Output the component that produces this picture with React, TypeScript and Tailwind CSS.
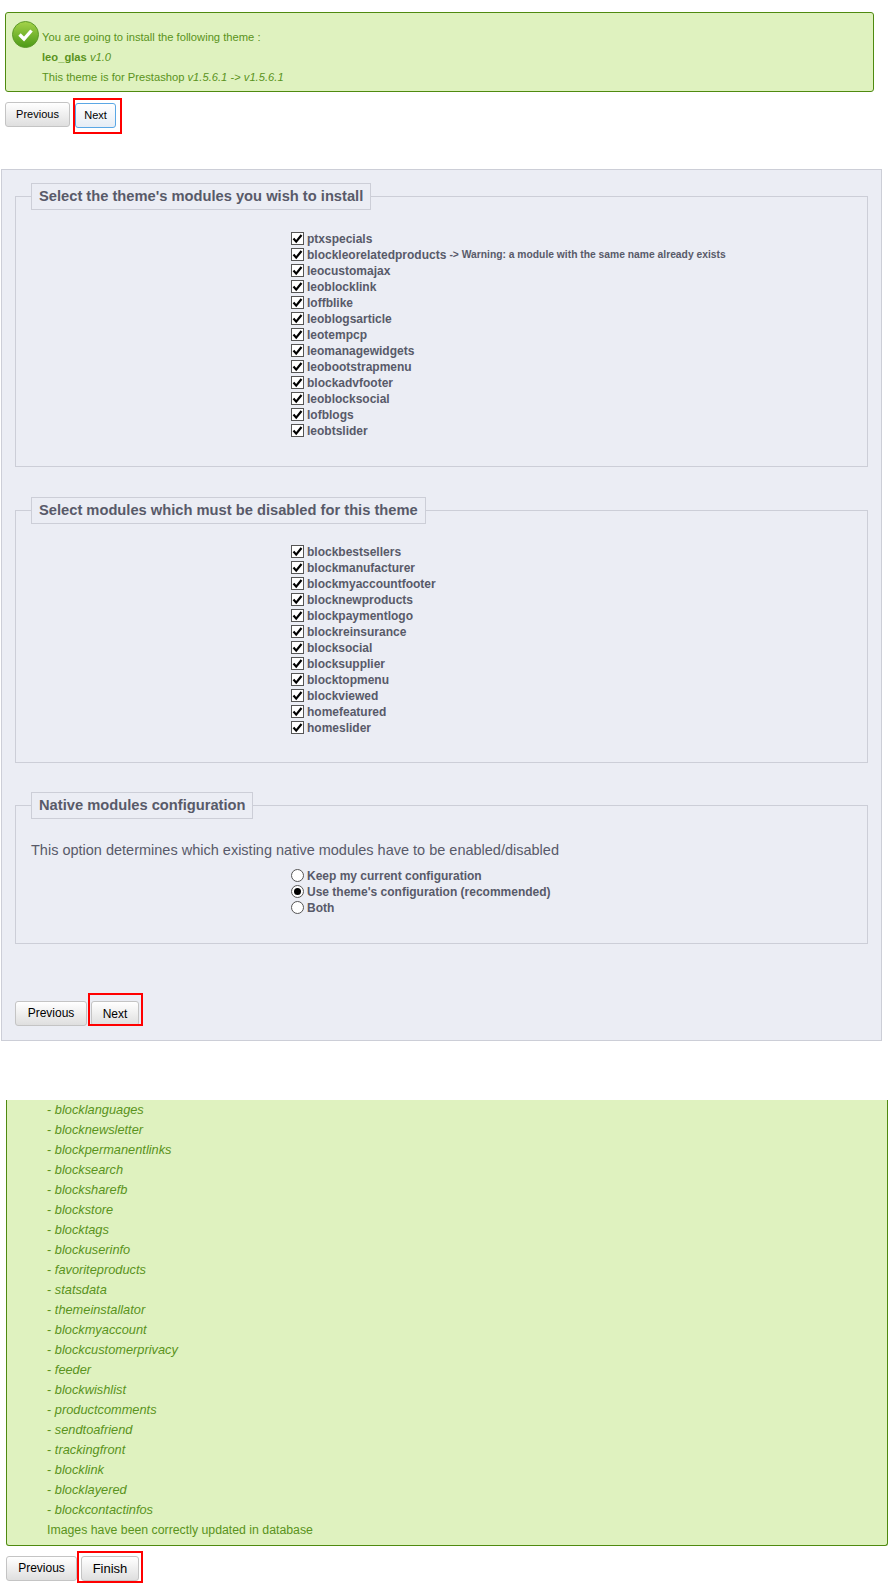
const installModules = ['ptxspecials', 'blockleorelatedproducts', 'leocustomajax', 'leoblocklink', 'loffblike', 'leoblogsarticle', 'leotempcp', 'leomanagewidgets', 'leobootstrapmenu', 'blockadvfooter', 'leoblocksocial', 'lofblogs', 'leobtslider'];

const disableModules = ['blockbestsellers', 'blockmanufacturer', 'blockmyaccountfooter', 'blocknewproducts', 'blockpaymentlogo', 'blockreinsurance', 'blocksocial', 'blocksupplier', 'blocktopmenu', 'blockviewed', 'homefeatured', 'homeslider'];

const updatedModules = ['blocklanguages', 'blocknewsletter', 'blockpermanentlinks', 'blocksearch', 'blocksharefb', 'blockstore', 'blocktags', 'blockuserinfo', 'favoriteproducts', 'statsdata', 'themeinstallator', 'blockmyaccount', 'blockcustomerprivacy', 'feeder', 'blockwishlist', 'productcomments', 'sendtoafriend', 'trackingfront', 'blocklink', 'blocklayered', 'blockcontactinfos'];

function Check({ label, note }: { label: string; note?: string }) {
  return (
    <div className="flex items-center h-4">
      <span className="w-[13px] h-[13px] border border-[#555] bg-white flex items-center justify-center shrink-0">
        <svg width="11" height="11" viewBox="0 0 11 11">
          <path d="M1.5 5.5 L4.2 8.6 L9.5 2" fill="none" stroke="#000" strokeWidth="2.2" />
        </svg>
      </span>
      <span className="ml-[3px] text-[12px] font-bold text-[#585a69] whitespace-nowrap">{label}</span>
      {note && <span className="ml-[3px] text-[10.3px] font-bold text-[#585a69] whitespace-nowrap">{note}</span>}
    </div>
  );
}

function Radio({ label, checked }: { label: string; checked?: boolean }) {
  return (
    <div className="flex items-center h-4">
      <span className="w-[13px] h-[13px] rounded-full border border-[#555] bg-white flex items-center justify-center shrink-0">
        {checked && <span className="w-[7px] h-[7px] rounded-full bg-black" />}
      </span>
      <span className="ml-[3px] text-[12px] font-bold text-[#585a69] whitespace-nowrap">{label}</span>
    </div>
  );
}

function Section({ title, className, children }: { title: string; className: string; children: React.ReactNode }) {
  return (
    <fieldset className={`border border-[#ccced7] w-[853px] ${className}`}>
      <legend className="ml-[15px] h-[27px] px-[7px] border border-[#ccced7] bg-[#ebedf4] text-[14.7px] font-bold text-[#585a69] leading-[25px]">
        {title}
      </legend>
      {children}
    </fieldset>
  );
}

function Btn({ label, className, focused }: { label: string; className: string; focused?: boolean }) {
  return (
    <button className={`rounded-[3px] border text-black text-center ${focused ? 'border-[#5aa7e5] bg-gradient-to-b from-white to-[#e6edf5]' : 'border-[#c4c4c4] bg-gradient-to-b from-white to-[#dfdfdf]'} ${className}`}>
      {label}
    </button>
  );
}

function SuccessIcon() {
  return (
    <svg width="27" height="27" viewBox="0 0 27 27" className="shrink-0">
      <defs>
        <linearGradient id="ok" x1="0" y1="0" x2="0" y2="1">
          <stop offset="0" stopColor="#a5d34a" />
          <stop offset="1" stopColor="#4c9a16" />
        </linearGradient>
      </defs>
      <circle cx="13.5" cy="13.5" r="13" fill="url(#ok)" stroke="#5d9a2a" />
      <path d="M7.5 13.5 L12 18 L19.5 9.5" fill="none" stroke="#fff" strokeWidth="3.4" />
    </svg>
  );
}

export default function App() {
  return (
    <div className="w-[894px] h-[1590px] bg-white overflow-hidden font-['Liberation_Sans',Arial,sans-serif]">
      <div className="pt-3 pl-[5px]">
        <div className="w-[869px] h-[80px] border border-[#4f8a10] rounded-[3px] bg-[#dff2bf] text-[#5a9320] text-[11.2px] flex pl-[6px] pt-2">
          <SuccessIcon />
          <div className="ml-[3px] pt-[6px] leading-[20px]">
            <div>You are going to install the following theme :</div>
            <div><b>leo_glas</b> <i>v1.0</i></div>
            <div>This theme is for Prestashop <i>v1.5.6.1</i> -&gt; <i>v1.5.6.1</i></div>
          </div>
        </div>
        <div className="flex mt-[10px]">
          <Btn label="Previous" className="w-[65px] h-[25px] text-[11px]" />
          <div className="relative ml-[5px]">
            <Btn label="Next" focused className="w-[41px] h-[25px] text-[11px]" />
            <span className="absolute -left-[2px] -right-[6px] -top-[4px] -bottom-[6px] border-2 border-[#f00]" />
          </div>
        </div>
      </div>

      <div className="mt-[41px] ml-[1px] w-[881px] h-[872px] border border-[#ccced7] bg-[#ebedf4] pl-[13px] pt-[13px]">
        <Section title="Select the theme's modules you wish to install" className="h-[284px]">
          <div className="pl-[275px] pt-[21px]">
            {installModules.map((m) => (
              <Check key={m} label={m} note={m === 'blockleorelatedproducts' ? '-> Warning: a module with the same name already exists' : undefined} />
            ))}
          </div>
        </Section>
        <Section title="Select modules which must be disabled for this theme" className="h-[266px] mt-[30px]">
          <div className="pl-[275px] pt-[20px]">
            {disableModules.map((m) => (
              <Check key={m} label={m} />
            ))}
          </div>
        </Section>
        <Section title="Native modules configuration" className="h-[152px] mt-[29px]">
          <p className="pl-[15px] pt-[21px] text-[14.5px] leading-[20px] text-[#585a69]">
            This option determines which existing native modules have to be enabled/disabled
          </p>
          <div className="pl-[275px] pt-[8px]">
            <Radio label="Keep my current configuration" />
            <Radio label="Use theme's configuration (recommended)" checked />
            <Radio label="Both" />
          </div>
        </Section>
        <div className="flex mt-[57px]">
          <Btn label="Previous" className="w-[72px] h-[25px] text-[12px]" />
          <div className="relative ml-[4px]">
            <Btn label="Next" className="w-[48px] h-[25px] text-[12px]" />
            <span className="absolute -left-[3px] -right-[4px] -top-[8px] bottom-0 border-2 border-[#f00]" />
          </div>
        </div>
      </div>

      <div className="mt-[59px] ml-[6px] w-[882px] h-[446px] border-x border-b border-[#4f8a10] rounded-b-[3px] bg-[#dff2bf] text-[#5a9320] leading-[20px] pl-[40px]">
        {updatedModules.map((m) => (
          <div key={m} className="text-[12.8px]">- <i>{m}</i></div>
        ))}
        <div className="text-[12.3px]">Images have been correctly updated in database</div>
      </div>
      <div className="flex mt-[10px] ml-[6px]">
        <Btn label="Previous" className="w-[71px] h-[25px] text-[12px]" />
        <div className="relative ml-[4px]">
          <Btn label="Finish" className="w-[58px] h-[25px] text-[13px]" />
          <span className="absolute -left-[4px] -right-[4px] -top-[5px] -bottom-[2px] border-2 border-[#f00]" />
        </div>
      </div>
    </div>
  );
}
